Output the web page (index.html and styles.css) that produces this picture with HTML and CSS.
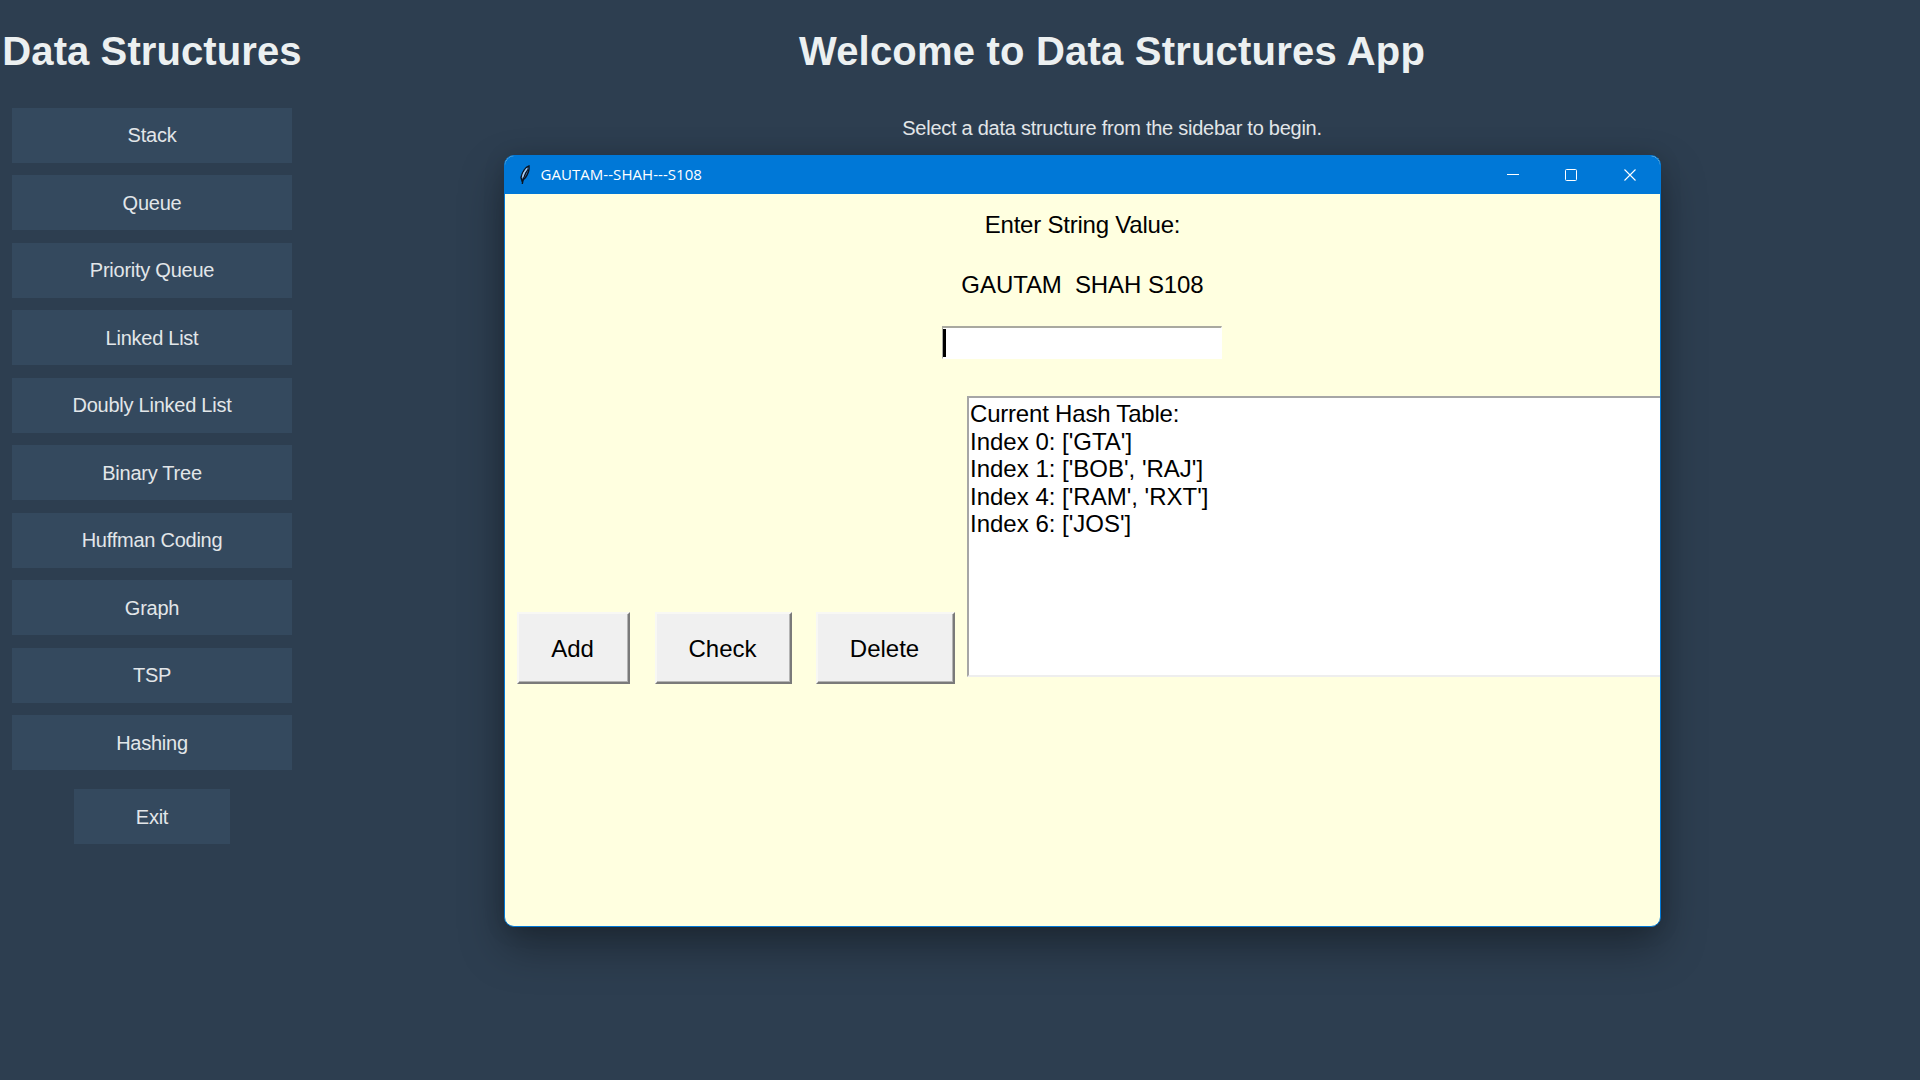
FILE: index.html
```html
<!DOCTYPE html>
<html lang="en">
<head>
<meta charset="utf-8">
<title>Data Structures App</title>
<link rel="stylesheet" href="styles.css">
</head>
<body>
<div class="app">
  <nav class="sidebar">
    <h1 class="heading side-title">Data Structures</h1>
    <div class="menu">
      <button class="item">Stack</button>
      <button class="item">Queue</button>
      <button class="item">Priority Queue</button>
      <button class="item">Linked List</button>
      <button class="item">Doubly Linked List</button>
      <button class="item">Binary Tree</button>
      <button class="item">Huffman Coding</button>
      <button class="item">Graph</button>
      <button class="item">TSP</button>
      <button class="item">Hashing</button>
    </div>
    <button class="item exit">Exit</button>
  </nav>
  <main class="welcome">
    <h1 class="heading welcome-title">Welcome to Data Structures App</h1>
    <p class="hint">Select a data structure from the sidebar to begin.</p>
  </main>
</div>

<section class="window">
  <header class="titlebar">
    <svg class="feather" width="14" height="22" viewBox="0 0 14 22">
      <path d="M11 2C7.500 3 4 8 3 13.500L4 17L7.500 13.500C10 10 11.500 6 11 2Z" fill="#4f83c4" stroke="#0b1420" stroke-width="1.400"/>
      <path d="M10 5C7 9.500 5 13 4.300 20" fill="none" stroke="#0b1420" stroke-width="1.400"/>
      <path d="M9 4.500C6.500 7.500 5 10.500 4.500 13.500" fill="none" stroke="#a9cbee" stroke-width="1.500"/>
    </svg>
    <span class="caption">GAUTAM--SHAH---S108</span>
    <svg class="controls" width="131" height="12" viewBox="0 0 131 12" fill="none" stroke="#fff">
      <path d="M0 5.500H12"/>
      <rect x="58.500" y=".5" width="11" height="11" rx="1"/>
      <path d="M117.500 .5l11 11M128.500 .5l-11 11" stroke-width="1.100"/>
    </svg>
  </header>
  <div class="client">
    <p class="label prompt">Enter String Value:</p>
    <p class="label name">GAUTAM&nbsp; SHAH S108</p>
    <div class="entry"><i class="caret"></i></div>
    <div class="row">
      <button class="raised add">Add</button>
      <button class="raised check">Check</button>
      <button class="raised delete">Delete</button>
      <pre class="output"><span class="summary">Current Hash Table:</span>
Index 0: ['GTA']
Index 1: ['BOB', 'RAJ']
Index 4: ['RAM', 'RXT']
Index 6: ['JOS']</pre>
    </div>
  </div>
</section>
</body>
</html>
```
FILE: styles.css
```css
* { box-sizing: border-box; }
body {
  margin: 0;
  width: 1920px;
  height: 1080px;
  overflow: hidden;
  background: #2d3e50;
  font-family: "Liberation Sans", Arial, sans-serif;
}
h1, p, pre { margin: 0; }
button { border: 0; padding: 0; margin: 0; font-family: inherit; }

.app { display: flex; height: 100%; color: #ecf0f1; }
.sidebar {
  width: 304px;
  display: flex;
  flex-direction: column;
  align-items: center;
}
.heading {
  margin-top: 28px;
  font-size: 40px;
  line-height: 46px;
  font-weight: bold;
  white-space: nowrap;
}
.side-title { letter-spacing: 0.1px; }
.welcome-title { letter-spacing: 0.2px; }
.menu {
  margin-top: 33.5px;
  display: flex;
  flex-direction: column;
  gap: 12.5px;
}
.item {
  width: 280px;
  height: 55px;
  padding-top: 1px;
  background: #34495e;
  color: #e2e6e9;
  font-size: 20px;
  letter-spacing: -0.25px;
}
.exit { width: 156px; margin-top: 19px; }
.welcome {
  flex: 1;
  display: flex;
  flex-direction: column;
  align-items: center;
}
.hint {
  margin-top: 42px;
  font-size: 20px;
  line-height: 24px;
  letter-spacing: -0.26px;
  color: #e2e6e9;
}

.window {
  position: absolute;
  left: 504px;
  top: 155px;
  width: 1157px;
  height: 772px;
  border: 1px solid #0078d7;
  border-radius: 10px;
  background: #ffffe0;
  overflow: hidden;
  box-shadow: 0 20px 44px rgba(0, 0, 0, .34), 0 2px 22px rgba(0, 0, 0, .12);
  color: #000;
}
.titlebar {
  display: flex;
  align-items: center;
  height: 38px;
  padding: 0 22px 0 13px;
  background: #0078d7;
  color: #fff;
}
.caption {
  margin-left: 8.5px;
  padding-bottom: 2px;
  flex: 1;
  font: 15px/20px "Open Sans", sans-serif;
  letter-spacing: 0.05px;
}
.client { display: flex; flex-direction: column; align-items: center; }
.label { font-size: 24px; line-height: 28px; }
.prompt { margin-top: 17px; letter-spacing: -0.22px; }
.name { margin-top: 32px; letter-spacing: -0.08px; }
.entry {
  width: 280px;
  height: 33px;
  margin: 27px 1px 0 0;
  border: solid;
  border-width: 2px 1px 1px 1px;
  border-color: #a9a9a0 #fff #fff #a9a9a0;
  background: #fff;
  display: flex;
}
.caret { width: 3px; height: 28px; margin-top: 1px; background: #000; }
.row {
  align-self: stretch;
  display: flex;
  align-items: flex-end;
  margin-top: 37px;
  padding-left: 12px;
  height: 288px;
}
.raised {
  height: 72px;
  padding: 1px 2px 0 0;
  background: #f0f0f0;
  border: 2px solid;
  border-color: #f8f8f4 #7a7a7a #7a7a7a #f8f8f4;
  box-shadow: inset -1px -1px #b4b4b4;
  font-size: 24px;
  color: #000;
}
.add { width: 113px; }
.check { width: 137px; margin-left: 25px; }
.delete { width: 139px; margin-left: 24px; }
.output {
  align-self: flex-start;
  flex: 1;
  height: 281px;
  margin-left: 12px;
  padding: 2px 0 0 1px;
  border: solid;
  border-width: 2px 0 2px 2px;
  border-color: #a6a6a6 #eee #eee #a6a6a6;
  background: #fff;
  font: 24px/27.5px "Liberation Sans", Arial, sans-serif;
}
.summary { letter-spacing: -0.2px; }
```
